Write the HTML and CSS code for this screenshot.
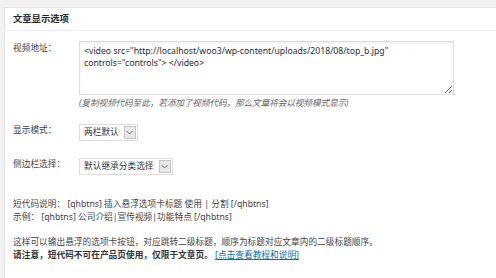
FILE: index.html
```html
<!DOCTYPE html>
<html lang="zh-CN">
<head>
  <meta charset="UTF-8" />
  <meta name="viewport" content="width=device-width, initial-scale=1" />
  <title>文章显示选项</title>
  <link rel="stylesheet" href="styles.css">
</head>
<body>

<div class="postbox">
  <h2 class="postbox-title">文章显示选项</h2>

  <div class="inside">
    <div class="field-row">
      <label class="field-label" for="videoCode">视频地址：</label>
      <div class="field">
        <textarea id="videoCode" class="code-box">&lt;video src="http://localhost/woo3/wp-content/uploads/2018/08/top_b.jpg" controls="controls"&gt; &lt;/video&gt;</textarea>
        <p class="hint">(复制视频代码至此，若添加了视频代码，那么文章将会以视频模式显示)</p>
      </div>
    </div>

    <div class="field-row">
      <span class="field-label">显示模式：</span>
      <div class="field">
        <div class="select-box">
          <span class="select-value">两栏默认</span>
          <span class="select-arrow">
            <svg width="7" height="5" viewBox="0 0 7 5"><path d="M0.5 1 L3.5 4 L6.5 1" fill="none" stroke="#666" stroke-width="0.9"/></svg>
          </span>
        </div>
      </div>
    </div>

    <div class="field-row">
      <span class="field-label">侧边栏选择：</span>
      <div class="field">
        <div class="select-box">
          <span class="select-value">默认继承分类选择</span>
          <span class="select-arrow">
            <svg width="7" height="5" viewBox="0 0 7 5"><path d="M0.5 1 L3.5 4 L6.5 1" fill="none" stroke="#666" stroke-width="0.9"/></svg>
          </span>
        </div>
      </div>
    </div>

    <div class="notes">
      <p>短代码说明： [qhbtns] 插入悬浮选项卡标题 使用 | 分割 [/qhbtns]<br>
      示例： [qhbtns] 公司介绍|宣传视频|功能特点 [/qhbtns]</p>
      <p>这样可以输出悬浮的选项卡按钮，对应跳转二级标题，顺序为标题对应文章内的二级标题顺序。<br>
      <strong>请注意，短代码不可在产品页使用，仅限于文章页。</strong> <a href="#">[点击查看教程和说明]</a></p>
    </div>
  </div>
</div>

</body>
</html>
```

FILE: styles.css
```css
body {
  margin: 0;
  padding: 7px 0 0 4px;
  background-color: #f1f1f1;
  font-family: 'Noto Sans', 'Noto Sans CJK SC', sans-serif;
  font-size: 8.7px;
  color: #444;
}
.postbox {
  background: #fff;
  border: 1px solid #e5e5e5;
  border-right: none;
  border-bottom: none;
  min-height: 280px;
}
.postbox-title {
  margin: 0;
  padding: 0 8px;
  height: 22px;
  line-height: 21px;
  font-size: 9.3px;
  font-weight: bold;
  color: #23282d;
  border-bottom: 1px solid #eee;
}
.inside {
  padding: 10px 8px 0 8px;
}
.field-row {
  display: flex;
  align-items: flex-start;
  margin-bottom: 17px;
}
.field-row:first-child {
  margin-bottom: 14px;
}
.field-label {
  width: 66px;
  flex-shrink: 0;
  line-height: 11px;
  padding-top: 1px;
  color: #444;
}
.field-row:first-child .field-label {
  padding-top: 2px;
}
.code-box {
  display: block;
  box-sizing: border-box;
  width: 375px;
  height: 54px;
  margin: 0;
  padding: 4px 4px;
  border: 1px solid #ddd;
  box-shadow: inset 0 1px 2px rgba(0,0,0,0.07);
  font-family: 'Noto Sans', 'Noto Sans CJK SC', sans-serif;
  font-size: 8.7px;
  line-height: 11.5px;
  color: #2a2e33;
  resize: vertical;
}
.hint {
  margin: 1px 0 0 0;
  line-height: 14px;
  font-style: italic;
  letter-spacing: -0.15px;
  color: #666;
}
.select-box {
  display: inline-flex;
  align-items: stretch;
  height: 17px;
  box-sizing: border-box;
  border: 1px solid #ddd;
  background: #fff;
}
.select-value {
  padding: 0 4px;
  line-height: 15px;
  color: #32373c;
}
.select-arrow {
  display: flex;
  align-items: center;
  justify-content: center;
  width: 12px;
  margin: 1px;
  background: #e8e8e8;
  border: 1px solid #c6c6c6;
  box-sizing: border-box;
}
.notes {
  margin-top: 23px;
}
.notes p {
  margin: 0 0 12px 0;
  line-height: 13px;
}
.notes strong {
  color: #333;
}
.notes a {
  color: #0073aa;
  text-decoration: underline;
}
```
